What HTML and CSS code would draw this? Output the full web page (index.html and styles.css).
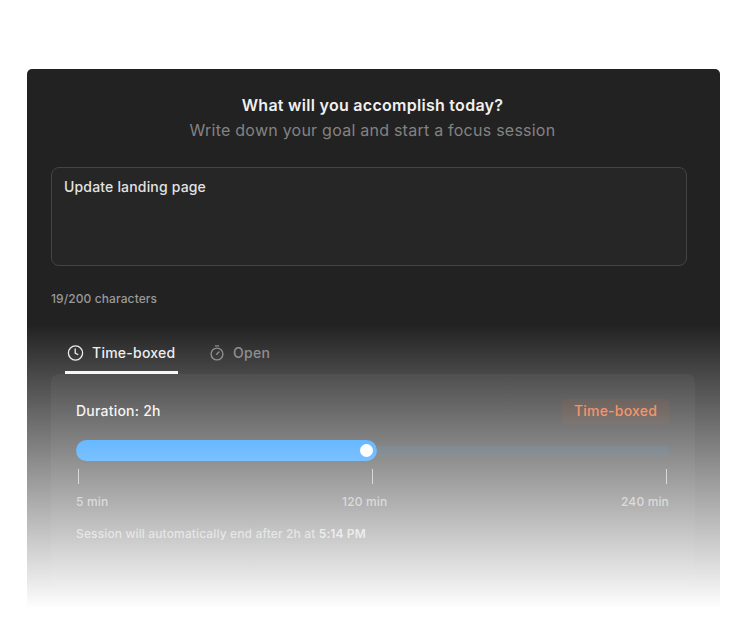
FILE: index.html
```html
<!DOCTYPE html>
<html lang="en">
<head>
<meta charset="utf-8">
<title>Focus session</title>
<link rel="stylesheet" href="styles.css">
</head>
<body>
<main class="window">
  <header class="intro">
    <h1 class="title"><span>What will you accomplish today?</span></h1>
    <p class="subtitle"><span>Write down your goal and start a focus session</span></p>
  </header>
  <div class="goal"><span>Update landing page</span></div>
  <p class="count"><span>19/200 characters</span></p>
  <nav class="tabs">
    <div class="tab tab-active">
      <svg width="17" height="16" viewBox="0 0 17 16" fill="none" stroke="currentColor" stroke-width="1.3" stroke-linecap="round" stroke-linejoin="round"><circle cx="8.5" cy="8" r="7.1"/><path d="M8.2 4v4.2l2.6 1.3"/></svg>
      <span>Time-boxed</span>
    </div>
    <div class="tab">
      <svg width="14" height="16" viewBox="0 0 14 16" fill="none" stroke="currentColor" stroke-width="1.4" stroke-linecap="round"><circle cx="7" cy="9" r="5.9"/><path d="M5.4 .9h3.2M6.7 9.3l2.3-2.3"/></svg>
      <span>Open</span>
    </div>
  </nav>
  <section class="panel">
    <div class="row">
      <span class="duration">Duration: 2h</span>
      <span class="badge"><span>Time-boxed</span></span>
    </div>
    <div class="slider"><div class="fill"><div class="thumb"></div></div><div class="rest"></div></div>
    <div class="scale">
      <div class="tick"><i></i><span>5 min</span></div>
      <div class="tick tick-mid"><i></i><span>120 min</span></div>
      <div class="tick tick-end"><i></i><span>240 min</span></div>
    </div>
    <p class="note">Session will automatically end after 2h at <b>5:14 PM</b></p>
  </section>
  <div class="fade"></div>
</main>
</body>
</html>
```
FILE: styles.css
```css
* { box-sizing: border-box; }
body { margin: 0; padding: 69px 27px 0; background: #fff; font-family: Inter, sans-serif; color: #f0f0f0; }
h1, p { margin: 0; }
.window { position: relative; height: 541px; padding: 24px 25px 0 24px; border-radius: 5px 5px 0 0; background: #222; overflow: hidden; }
.intro { text-align: center; margin-right: 1px; }
.title { font-size: 16px; line-height: 24px; font-weight: 600; letter-spacing: .28px; }
.subtitle { margin-top: 1px; font-size: 16px; line-height: 25px; letter-spacing: .24px; color: #838383; }
.goal { width: 636px; height: 99px; margin-top: 24px; padding: 9px 12px; border: 1px solid #444; border-radius: 8px; background: #262626; font-size: 14px; line-height: 20px; font-weight: 500; letter-spacing: .17px; color: #e2e2e2; }
.count { margin-top: 24px; font-size: 12px; line-height: 18px; font-weight: 500; letter-spacing: .1px; color: #999; }
.tabs { display: flex; gap: 16px; height: 42px; margin: 24px 0 0 14px; }
.tab { display: flex; align-items: center; height: 42px; padding: 0 2px 1px; font-size: 14px; font-weight: 500; letter-spacing: .28px; color: #828282; }
.tab svg { flex: none; margin-right: 9px; }
.tab-active svg { margin-right: 8px; }
.tab + .tab { margin-left: 14px; }
.tab-active { width: 113px; border-bottom: 3px solid #f4f4f4; padding: 2px 2px 0; letter-spacing: .25px; color: #ececec; }
.panel { height: 211px; width: 644px; padding: 25px 26px 0 25px; border-radius: 8px; background: #2b2b2b; }
.row { display: flex; justify-content: space-between; align-items: flex-start; }
.duration { font-size: 14px; line-height: 24px; font-weight: 500; letter-spacing: .22px; }
.badge { width: 107px; height: 25px; border-radius: 4px; background: #392c26; color: #f0662a; font-size: 14px; line-height: 24px; font-weight: 500; letter-spacing: .22px; text-align: center; }
.slider { display: flex; align-items: center; height: 21px; margin-top: 16px; }
.fill { display: flex; align-items: center; justify-content: flex-end; width: 301px; height: 21px; padding-right: 4px; border-radius: 11px; background: #0088ff; }
.thumb { width: 13px; height: 13px; border-radius: 50%; background: #fff; }
.rest { flex: 1; height: 10px; border-radius: 0 4px 4px 0; background: #243240; }
.scale { display: flex; justify-content: space-between; margin-top: 8px; font-size: 12px; line-height: 18px; font-weight: 500; letter-spacing: .15px; color: #a0a0a0; }
.tick { display: flex; flex-direction: column; width: 49px; }
.tick i { width: 1px; height: 15px; margin: 0 2px 9px; background: #aaa; }
.tick-mid { margin-left: -12px; }
.tick-mid i { margin-left: 30px; }
.tick-end { align-items: flex-end; }
.note { margin-top: 14px; font-size: 12px; line-height: 18px; font-weight: 500; letter-spacing: .13px; color: #a0a0a0; }
.note b { font-weight: 600; color: #bbb; }
.fade { position: absolute; left: 0; right: 0; top: 256px; bottom: 0; background: linear-gradient(rgba(255,255,255,0), #fff 284px); }
```
